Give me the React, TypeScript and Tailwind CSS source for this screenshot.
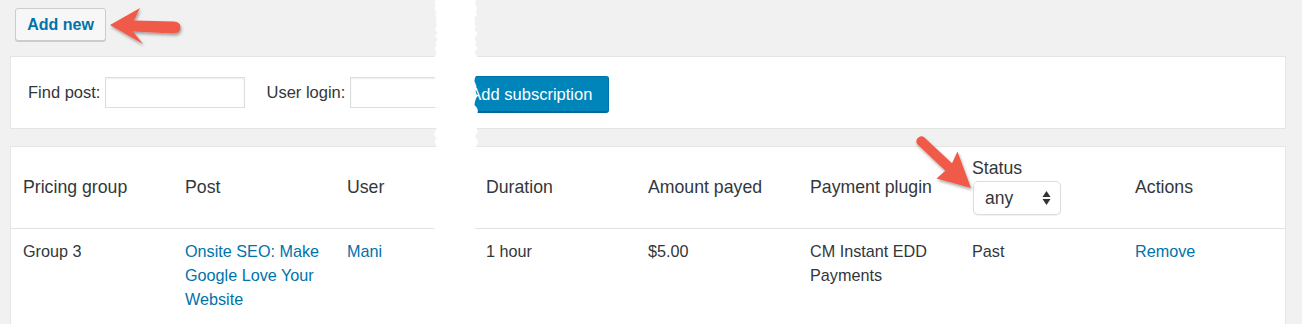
import React from "react";

function tornPoints(): string {
  // deterministic jagged strip
  let seed = 7;
  const rnd = () => {
    seed = (seed * 9301 + 49297) % 233280;
    return seed / 233280;
  };
  const left: string[] = [];
  const right: string[] = [];
  for (let y = 0; y <= 324; y += 3) {
    const lx = 4 + rnd() * 4;
    const rx = 44 + rnd() * 4;
    left.push(`${lx.toFixed(1)},${y}`);
    right.push(`${rx.toFixed(1)},${y}`);
  }
  return [...left, ...right.reverse()].join(" ");
}

const TORN = tornPoints();

export default function App() {
  const font = "font-['Liberation_Sans',Arial,Helvetica,sans-serif]";
  return (
    <div className={`relative w-[1302px] h-[324px] overflow-hidden bg-[#f1f1f1] text-[#32373c] ${font}`}>
      {/* Top: Add new */}
      <div className="h-[56px] pl-[15px] pt-[8px]">
        <button className="h-[33px] w-[91px] rounded-[3px] border border-[#cccccc] bg-[#f7f7f7] text-[16px] font-bold text-[#0073aa] shadow-[0_1px_0_#cccccc] leading-none">
          Add new
        </button>
      </div>

      {/* Form panel */}
      <div className="ml-[10px] w-[1276px] h-[73px] border border-[#e5e5e5] bg-white flex items-center pl-[17px] text-[16.5px]">
        <span>Find post:</span>
        <div className="ml-[5px] h-[31px] w-[140px] border border-[#dddddd] bg-white shadow-[inset_0_1px_2px_rgba(0,0,0,0.07)]" />
        <span className="ml-[21px]">User login:</span>
        <div className="ml-[5px] h-[31px] w-[100px] border border-[#dddddd] bg-white shadow-[inset_0_1px_2px_rgba(0,0,0,0.07)]" />
        <button className="ml-[3px] mt-[3px] h-[36px] w-[156px] rounded-[3px] border border-[#0073aa] border-b-[#006799] bg-[#0085ba] text-white text-[16.5px] shadow-[0_1px_0_#006799] leading-none">
          Add subscription
        </button>
      </div>

      {/* Table panel */}
      <div className="ml-[10px] mt-[17px] w-[1276px] border border-[#e5e5e5] bg-white">
        <div className="grid grid-cols-[162px_162px_139px_162px_162px_162px_163px_1fr] h-[81px] items-center border-b border-[#e1e1e1] text-[17.7px] box-content">
          <div className="pl-[12px]">Pricing group</div>
          <div className="pl-[12px]">Post</div>
          <div className="pl-[12px]">User</div>
          <div className="pl-[12px]">Duration</div>
          <div className="pl-[12px]">Amount payed</div>
          <div className="pl-[12px]">Payment plugin</div>
          <div className="pl-[12px] flex flex-col items-start">
            <span className="leading-[20px] mt-[-2px]">Status</span>
            <div className="mt-[3px] ml-[1px] h-[34px] w-[88px] rounded-[5px] border border-[#dddddd] bg-white shadow-[0_1px_1px_rgba(0,0,0,0.06)] flex items-center justify-between pl-[11px] pr-[9px]">
              <span className="text-[17.5px]">any</span>
              <svg width="9" height="16" viewBox="0 0 9 16">
                <polygon points="4.5,1 8.5,7 0.5,7" fill="#333" />
                <polygon points="0.5,9 8.5,9 4.5,15" fill="#333" />
              </svg>
            </div>
          </div>
          <div className="pl-[12px]">Actions</div>
        </div>
        <div className="grid grid-cols-[162px_162px_139px_162px_162px_162px_163px_1fr] pt-[10px] pb-[40px] text-[16.2px] leading-[24px]">
          <div className="pl-[12px] pr-[12px]">Group 3</div>
          <div className="pl-[12px] pr-[12px] text-[#0073aa]">Onsite SEO: Make Google Love Your Website</div>
          <div className="pl-[12px] pr-[12px] text-[#0073aa]">Mani</div>
          <div className="pl-[12px] pr-[12px]">1 hour</div>
          <div className="pl-[12px] pr-[12px]">$5.00</div>
          <div className="pl-[12px] pr-[12px]">CM Instant EDD Payments</div>
          <div className="pl-[12px] pr-[12px]">Past</div>
          <div className="pl-[12px] pr-[12px] text-[#0073aa]">Remove</div>
        </div>
      </div>

      {/* Torn splice strip */}
      <svg className="absolute left-[430px] top-0" width="52" height="324" viewBox="0 0 52 324">
        <polygon points={TORN} fill="#ffffff" />
      </svg>

      {/* Arrows */}
      <svg className="absolute left-0 top-0 pointer-events-none" width="1302" height="324" viewBox="0 0 1302 324">
        <defs>
          <filter id="sh" x="-20%" y="-20%" width="140%" height="160%">
            <feDropShadow dx="1" dy="2" stdDeviation="1.6" floodColor="#000" floodOpacity="0.35" />
          </filter>
        </defs>
        <path
          d="M110,25 L140,8 L134,20.5 L174,21.5 Q180.5,22 180.5,27.5 Q180.5,33 174,33.5 L133,31.5 L143,44 Z"
          fill="#f05a4a"
          filter="url(#sh)"
        />
        <path
          d="M924.4,137.4 L952,163.2 L957.5,151.5 L971,188 L936.5,178.5 L945.3,170.7 L917.6,144.6 A5,5 0 0 1 924.4,137.4 Z"
          fill="#f05a4a"
          filter="url(#sh)"
        />
      </svg>
    </div>
  );
}
